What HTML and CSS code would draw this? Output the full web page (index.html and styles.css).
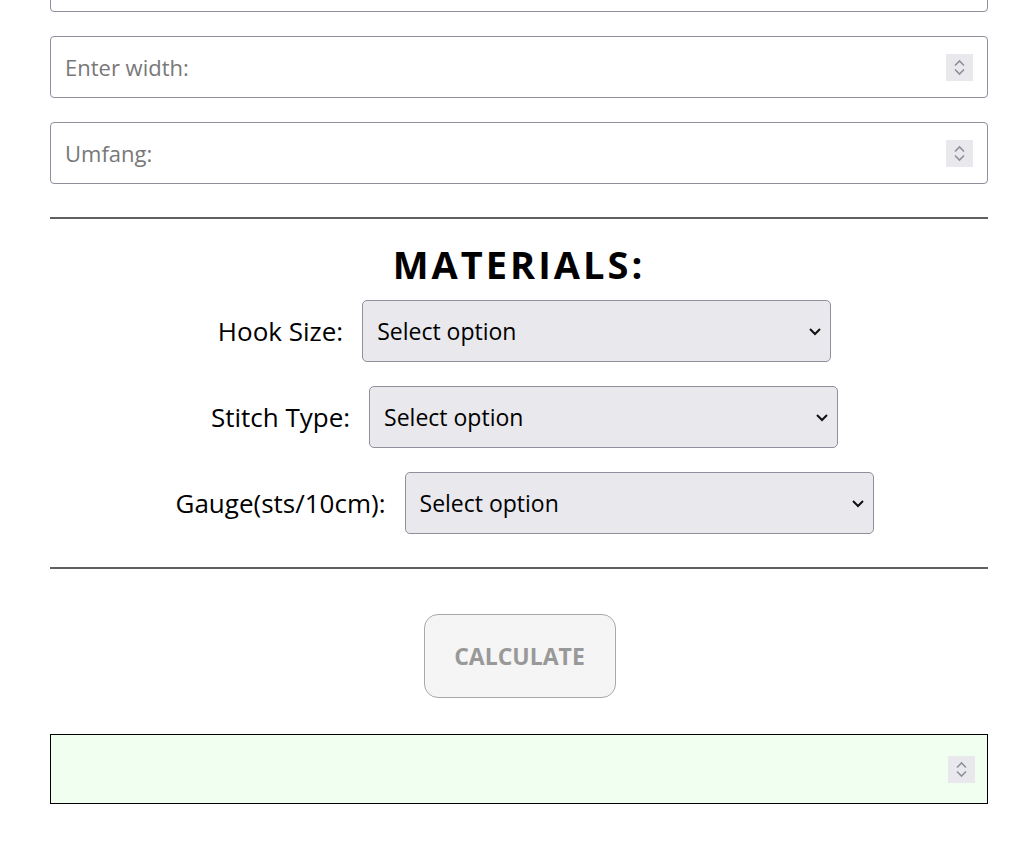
FILE: index.html
```html
<!DOCTYPE html>
<html lang="en">
<head>
<meta charset="utf-8">
<title>Crochet Calculator</title>
<link rel="stylesheet" href="styles.css">
</head>
<body>
<div class="page">
  <div class="field">
    <input class="field-input" type="text" placeholder="Enter length:">
    <span class="spinner"><svg width="27" height="27" viewBox="0 0 27 27"><path d="M9 11.5 L13.5 7 L18 11.5 M9 15.5 L13.5 20 L18 15.5" fill="none" stroke="#8f8f9d" stroke-width="1.6"/></svg></span>
  </div>
  <div class="field">
    <input class="field-input" type="text" placeholder="Enter width:">
    <span class="spinner"><svg width="27" height="27" viewBox="0 0 27 27"><path d="M9 11.5 L13.5 7 L18 11.5 M9 15.5 L13.5 20 L18 15.5" fill="none" stroke="#8f8f9d" stroke-width="1.6"/></svg></span>
  </div>
  <div class="field">
    <input class="field-input" type="text" placeholder="Umfang:">
    <span class="spinner"><svg width="27" height="27" viewBox="0 0 27 27"><path d="M9 11.5 L13.5 7 L18 11.5 M9 15.5 L13.5 20 L18 15.5" fill="none" stroke="#8f8f9d" stroke-width="1.6"/></svg></span>
  </div>

  <hr class="rule rule-top">

  <h2 class="section-title">MATERIALS:</h2>

  <div class="select-row">
    <label class="select-label">Hook Size:</label>
    <div class="select-wrap">
      <select class="select"><option>Select option</option></select>
      <svg class="chevron" width="14" height="9" viewBox="0 0 14 9"><path d="M2 2 L7 7 L12 2" fill="none" stroke="#111" stroke-width="2"/></svg>
    </div>
  </div>
  <div class="select-row">
    <label class="select-label">Stitch Type:</label>
    <div class="select-wrap">
      <select class="select"><option>Select option</option></select>
      <svg class="chevron" width="14" height="9" viewBox="0 0 14 9"><path d="M2 2 L7 7 L12 2" fill="none" stroke="#111" stroke-width="2"/></svg>
    </div>
  </div>
  <div class="select-row">
    <label class="select-label">Gauge(sts/10cm):</label>
    <div class="select-wrap">
      <select class="select"><option>Select option</option></select>
      <svg class="chevron" width="14" height="9" viewBox="0 0 14 9"><path d="M2 2 L7 7 L12 2" fill="none" stroke="#111" stroke-width="2"/></svg>
    </div>
  </div>

  <hr class="rule rule-bottom">

  <div class="button-row">
    <button class="calc-button" disabled>Calculate</button>
  </div>

  <div class="field result">
    <input class="field-input" type="text">
    <span class="spinner"><svg width="27" height="27" viewBox="0 0 27 27"><path d="M9 11.5 L13.5 7 L18 11.5 M9 15.5 L13.5 20 L18 15.5" fill="none" stroke="#8f8f9d" stroke-width="1.6"/></svg></span>
  </div>
</div>
</body>
</html>
```

FILE: styles.css
```css
html, body {
  margin: 0;
  padding: 0;
  background: #ffffff;
}

body {
  font-family: "Open Sans", "Noto Sans", sans-serif;
  color: #000;
}

.page {
  margin-top: -50px;
  padding: 0 48px 40px 50px;
}

.field {
  display: flex;
  align-items: center;
  box-sizing: border-box;
  height: 62px;
  border: 1px solid #8f8f9d;
  border-radius: 4px;
  padding: 0 14px 0 14px;
  margin-bottom: 24px;
  background: #fff;
}

.field-input {
  flex: 1;
  border: none;
  outline: none;
  background: transparent;
  font-family: inherit;
  font-size: 22px;
  color: #000;
  padding: 0;
}

.field-input::placeholder {
  color: #787878;
}

.spinner {
  display: flex;
  width: 27px;
  height: 27px;
  background: #e9e9ed;
}

.rule {
  border: none;
  border-top: 2px solid #606060;
  margin: 0;
}

.rule-top {
  margin-top: 33px;
}

.section-title {
  margin: 26px 0 17px 0;
  text-align: center;
  font-size: 38px;
  line-height: 38px;
  font-weight: 700;
  letter-spacing: 3px;
}

.select-row {
  display: flex;
  justify-content: center;
  align-items: center;
  gap: 19px;
  margin-bottom: 24px;
  padding-left: 11px;
}

.select-label {
  font-size: 26px;
}

.select-wrap {
  position: relative;
}

.select {
  appearance: none;
  -webkit-appearance: none;
  box-sizing: border-box;
  width: 469px;
  height: 62px;
  border: 1px solid #8f8f9d;
  border-radius: 5px;
  background: #e9e9ed;
  font-family: inherit;
  font-size: 23px;
  color: #000;
  padding: 0 40px 0 14px;
}

.chevron {
  position: absolute;
  right: 9px;
  top: 27px;
  pointer-events: none;
}

.rule-bottom {
  margin-top: 33px;
}

.button-row {
  display: flex;
  justify-content: center;
  margin-top: 45px;
  margin-bottom: 36px;
}

.calc-button {
  width: 192px;
  height: 84px;
  border: 1px solid #a8a8a8;
  border-radius: 14px;
  background: #f5f5f5;
  color: #999999;
  font-family: inherit;
  font-size: 23px;
  font-weight: 700;
  text-transform: uppercase;
  margin-left: 1px;
}

.result {
  height: 70px;
  border: 1px solid #000;
  border-radius: 0;
  background: #f0fff0;
  padding-right: 12px;
}
```
